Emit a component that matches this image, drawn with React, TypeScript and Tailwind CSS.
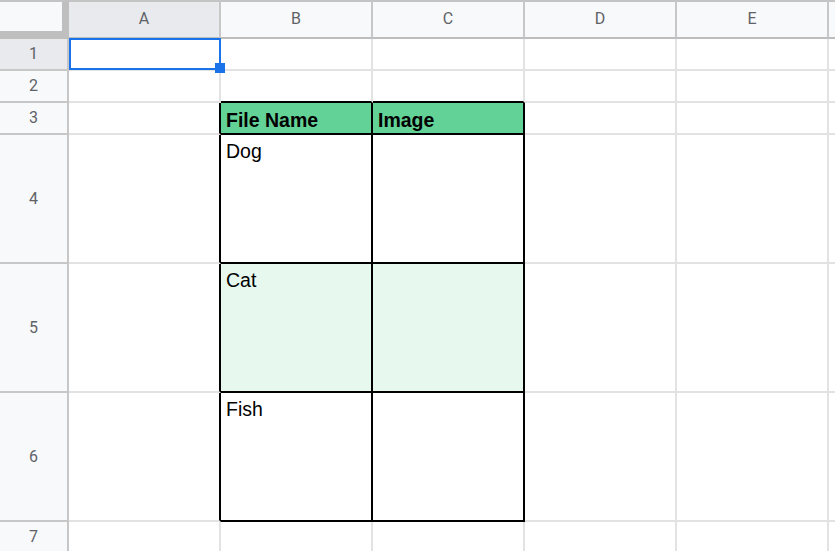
import React from 'react';

const columns = ['A', 'B', 'C', 'D', 'E', ''];

// rows 1..7, cells for columns A..F
const rows = [
  { n: 1, cells: ['', '', '', '', '', ''] },
  { n: 2, cells: ['', '', '', '', '', ''] },
  { n: 3, cells: ['', 'File Name', 'Image', '', '', ''] },
  { n: 4, cells: ['', 'Dog', '', '', '', ''] },
  { n: 5, cells: ['', 'Cat', '', '', '', ''] },
  { n: 6, cells: ['', 'Fish', '', '', '', ''] },
  { n: 7, cells: ['', '', '', '', '', ''] },
];

function cellClass(row: number, col: number) {
  const inTable = row >= 3 && row <= 6 && (col === 1 || col === 2);
  let bg = 'bg-white';
  if (inTable && row === 3) bg = 'bg-[#63d297]';
  else if (inTable && row === 5) bg = 'bg-[#e7f9ef]';

  let right = 'border-r-[#e2e2e2]';
  if (inTable || (row >= 3 && row <= 6 && col === 0)) right = 'border-r-black';

  let bottom = 'border-b-[#e2e2e2]';
  if (inTable || (row === 2 && (col === 1 || col === 2))) bottom = 'border-b-black';

  const align = row === 3 ? 'flex items-end pb-[2px]' : 'pt-[5px]';
  return `relative border-r-2 border-b-2 px-[5px] ${bg} ${right} ${bottom} ${align}`;
}

export default function App() {
  return (
    <div className="w-[835px] h-[551px] overflow-hidden bg-white font-['Liberation_Sans',Arial,sans-serif]">
      <div className="grid grid-cols-[69px_repeat(5,152px)_1fr] grid-rows-[39px_32px_32px_32px_129px_129px_129px_32px]">
        {/* corner */}
        <div className="border-t-2 border-t-[#c4c4c4] border-r-[7px] border-r-[#bfbfbf] border-b-[8px] border-b-[#bfbfbf] bg-[#f8f9fa]" />
        {columns.map((c, i) => (
          <div
            key={`h-${i}`}
            className={`flex items-center justify-center border-t-2 border-t-[#c4c4c4] border-r-2 border-r-[#c7c7c7] border-b-2 border-b-[#bdbdbd] pb-[1px] font-['Roboto',Arial,sans-serif] text-[16px] text-[#5f6368] ${
              i === 0 ? 'bg-[#e8eaed]' : 'bg-[#f8f9fa]'
            }`}
          >
            {c}
          </div>
        ))}

        {rows.map((r) => (
          <React.Fragment key={r.n}>
            <div
              className={`flex items-center justify-center border-r-2 border-r-[#c7c7c7] border-b-2 border-b-[#c7c7c7] font-['Roboto',Arial,sans-serif] text-[16px] text-[#5f6368] ${
                r.n === 1 ? 'bg-[#e8eaed]' : 'bg-[#f8f9fa]'
              }`}
            >
              {r.n}
            </div>
            {r.cells.map((text, ci) => (
              <div key={`${r.n}-${ci}`} className={cellClass(r.n, ci)}>
                {r.n === 3 ? (
                  <span className="text-[19.5px] font-bold text-black leading-[22px]">{text}</span>
                ) : (
                  <span className="text-[19.5px] text-black leading-[22px]">{text}</span>
                )}
                {r.n === 1 && ci === 0 && (
                  <>
                    <div className="absolute z-10 left-0 top-[-1px] right-[-2px] bottom-[-1px] border-2 border-[#1a73e8]" />
                    {/* fill handle */}
                    <div className="absolute z-20 right-[-6px] bottom-[-4px] w-[10px] h-[10px] bg-[#1a73e8]" />
                  </>
                )}
              </div>
            ))}
          </React.Fragment>
        ))}
      </div>
    </div>
  );
}
